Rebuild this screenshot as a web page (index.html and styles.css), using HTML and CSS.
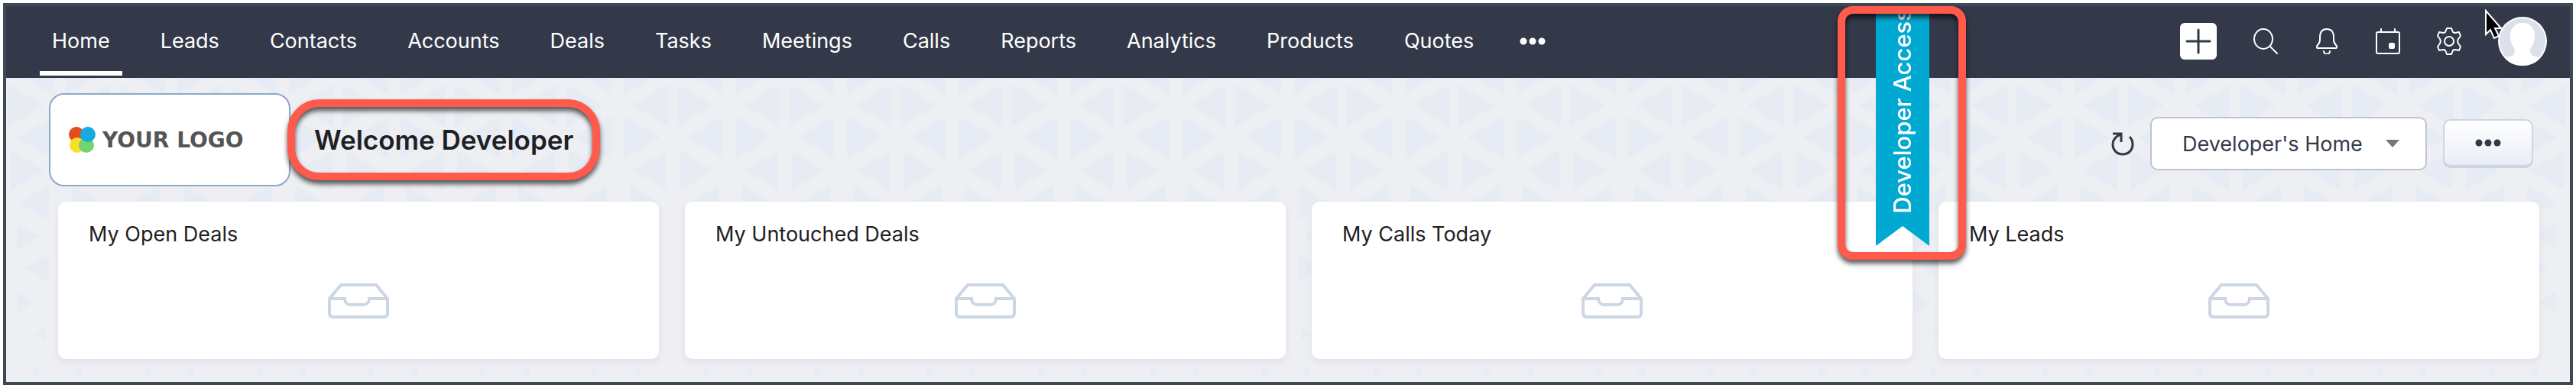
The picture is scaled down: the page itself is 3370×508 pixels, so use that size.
FILE: index.html
```html
<!DOCTYPE html>
<html lang="en">
<head>
    <meta charset="utf-8">
    <title>Developer's Home</title>
    <link rel="stylesheet" href="styles.css">
</head>
<body>
    <div class="app">
        <header class="topbar">
            <nav class="main-nav">
                <a href="#" class="active">Home</a>
                <a href="#">Leads</a>
                <a href="#">Contacts</a>
                <a href="#">Accounts</a>
                <a href="#">Deals</a>
                <a href="#">Tasks</a>
                <a href="#">Meetings</a>
                <a href="#">Calls</a>
                <a href="#">Reports</a>
                <a href="#">Analytics</a>
                <a href="#">Products</a>
                <a href="#">Quotes</a>
                <button class="nav-more" aria-label="More modules">
                    <svg width="34" height="14" viewBox="0 0 34 14" fill="currentColor"><circle cx="5" cy="7" r="4.5"/><circle cx="17" cy="7" r="4.5"/><circle cx="29" cy="7" r="4.5"/></svg>
                </button>
            </nav>
            <div class="tools">
                <button class="add-btn" aria-label="Create">
                    <svg width="48" height="48" viewBox="0 0 48 48" fill="none" stroke="#333949" stroke-width="3" stroke-linecap="round"><path d="M24 9v30M9 24h30"/></svg>
                </button>
                <button aria-label="Search">
                    <svg width="32" height="34" viewBox="0 0 32 34" fill="none" stroke="#fff" stroke-width="2" stroke-linecap="round"><ellipse cx="13" cy="14" rx="12" ry="13"/><path d="M22 24l9 9"/></svg>
                </button>
                <button aria-label="Notifications">
                    <svg width="32" height="34" viewBox="0 0 32 34" fill="none" stroke="#fff" stroke-width="2" stroke-linecap="round" stroke-linejoin="round"><path d="M4 26c-2 0-1-3 0-4 2-2 3-4 3-7v-3C7 5 10 1 16 1s9 4 9 11v3c0 3 1 5 3 7 1 1 2 4 0 4zM12 30c0 5 8 5 8 0"/></svg>
                </button>
                <button aria-label="Calendar">
                    <svg width="32" height="34" viewBox="0 0 32 34" fill="none" stroke="#fff" stroke-width="2" stroke-linecap="round"><rect x="1" y="5" width="30" height="28" rx="2"/><path d="M7 1v4M25 1v4"/><rect x="17" y="19" width="8" height="8" rx="2" fill="#fff" stroke="none"/></svg>
                </button>
                <button aria-label="Settings">
                    <svg width="32" height="36" viewBox="0 0 32 36" fill="none" stroke="#fff" stroke-width="2" stroke-linejoin="round"><path d="M13 1h6l2 5c1 1 2 1 3 1l5-1 2 5-3 4c-1 2-1 4 0 6l3 4-2 5-5-1c-1 0-2 0-3 1l-2 5h-6l-2-5c-1-1-2-1-3-1l-5 1-2-5 3-4c1-2 1-4 0-6l-3-4 2-5 5 1c1 0 2 0 3-1z"/><circle cx="16" cy="18" r="6"/></svg>
                </button>
                <button class="avatar" aria-label="Profile">
                    <svg width="64" height="64" viewBox="0 0 64 64"><circle cx="32" cy="32" r="32" fill="#fff"/><circle cx="32" cy="32" r="30" fill="#dce0eb"/><path d="M32 8c-10 0-16 7-16 17 0 8 3 13 6 18 0 5-1 8-7 9l-6 2c6 7 14 10 23 10s17-3 23-10l-6-2c-6-1-7-4-7-9 3-5 6-10 6-18 0-10-6-17-16-17z" fill="#fff"/></svg>
                </button>
            </div>
            <svg class="cursor" width="28" height="42" viewBox="0 0 28 42"><path d="M2 2v31l6-6 5 11 6-3-5-10h8z" fill="#000" stroke="#fff" stroke-width="2"/></svg>
        </header>

        <main class="home">
            <svg class="pattern" width="100%" height="100%" aria-hidden="true">
                <defs>
                    <pattern id="triangles" width="146" height="400" patternUnits="userSpaceOnUse">
                        <path fill="#e7ecf4" d="M78-34v56l48-28zM62-34v56L14-6z
                            M2 8v56l48-28zM136 8v56L88 36z
                            M78 50v56l48-28zM62 50v56L14 78z
                            M6 95v52l44-26zM134 95v52l-45-26z
                            M86 140v46l38-23zM56 140v46l-38-23z
                            M14 190v35l31-17zM124 190v35l-31-17z
                            M84 230v38l30-19zM56 230v38l-30-19z
                            M14 279v30l22-15zM124 279v30l-22-15z
                            M88 325v20l15-10zM52 325v20l-15-10z
                            M36 376v19l11-9zM100 376v19l-11-9z"/>
                    </pattern>
                </defs>
                <rect width="100%" height="100%" fill="url(#triangles)"/>
            </svg>

            <div class="welcome-row">
                <div class="logo">
                    <svg width="36" height="34" viewBox="0 0 36 34" aria-hidden="true"><circle cx="10" cy="10" r="10" fill="#e04e20"/><circle cx="11" cy="24" r="10" fill="#fddc2c"/><circle cx="23" cy="24" r="10" fill="#70d572"/><circle cx="25" cy="10" r="10" fill="#15abdf"/></svg>
                    <span>YOUR LOGO</span>
                </div>
                <h1>Welcome Developer</h1>
                <div class="actions">
                    <button class="refresh" aria-label="Refresh">
                        <svg width="30" height="32" viewBox="0 0 30 32" fill="none" stroke="#333949" stroke-width="3"><path d="M2 3h11v11M12 4C5 7 2 12 2 17c0 7 5 13 13 13s13-6 13-13c0-4-1-7-4-10"/></svg>
                    </button>
                    <div class="view-select">
                        <select aria-label="Home view">
                            <option>Developer's Home</option>
                        </select>
                        <svg width="18" height="10" viewBox="0 0 18 10"><path d="M0 0h18l-9 10z" fill="#777"/></svg>
                    </div>
                    <button class="more-btn" aria-label="More actions">
                        <svg width="34" height="14" viewBox="0 0 34 14" fill="#333949"><circle cx="5" cy="7" r="4.5"/><circle cx="17" cy="7" r="4.5"/><circle cx="29" cy="7" r="4.5"/></svg>
                    </button>
                </div>
            </div>

            <svg width="0" height="0" class="sprite">
                <symbol id="inbox" viewBox="0 0 80 46">
                    <path d="M2 20L17 2h46l15 18v19q0 5-5 5H7q-5 0-5-5zM2 20h20c0 5 3 8 8 8h16c5 0 8-3 8-8h24" fill="none" stroke="#cdd6e5" stroke-width="4"/>
                </symbol>
            </svg>
            <div class="cards">
                <section class="card">
                    <h2>My Open Deals</h2>
                    <svg class="empty"><use href="#inbox"/></svg>
                </section>
                <section class="card">
                    <h2>My Untouched Deals</h2>
                    <svg class="empty"><use href="#inbox"/></svg>
                </section>
                <section class="card">
                    <h2>My Calls Today</h2>
                    <svg class="empty"><use href="#inbox"/></svg>
                </section>
                <section class="card">
                    <h2>My Leads</h2>
                    <svg class="empty"><use href="#inbox"/></svg>
                </section>
            </div>
        </main>

        <div class="ribbon"><span>Developer Access</span></div>
        <div class="ribbon-highlight"></div>
    </div>
</body>
</html>
```
FILE: styles.css
```css
* {
    box-sizing: border-box;
}
body {
    margin: 4px;
    background: #fff;
    font-family: Inter, "Liberation Sans", sans-serif;
    font-size: 27px;
    color: #1f2023;
}
button {
    padding: 0;
    border: none;
    background: none;
    color: inherit;
    cursor: pointer;
}
svg {
    display: block;
}
.app {
    position: relative;
    border: 4px solid #3b4a55;
    box-shadow: 0 0 4px rgba(0, 0, 0, 0.6);
}

/* top navigation */
.topbar {
    position: relative;
    display: flex;
    justify-content: space-between;
    height: 94px;
    padding: 0 30px 3px 44px;
    background: #333949;
    color: #fff;
}
.main-nav {
    display: flex;
    gap: 34px;
}
.main-nav a {
    position: relative;
    display: flex;
    align-items: center;
    padding: 0 16px;
    color: #fff;
    text-decoration: none;
}
.main-nav a.active::after {
    content: "";
    position: absolute;
    left: 0;
    right: 0;
    bottom: 0;
    height: 6px;
    background: #fff;
}
.nav-more {
    padding: 0 10px;
}
.tools {
    display: flex;
    align-items: center;
    gap: 48px;
}
.add-btn {
    border-radius: 6px;
    background: #fff;
}
.cursor {
    position: absolute;
    top: 4px;
    right: 84px;
}

/* home */
.home {
    position: relative;
    padding: 20px 40px 30px 56px;
    background: #eeeff3;
}
.pattern {
    position: absolute;
    top: 0;
    left: 0;
}
.sprite {
    position: absolute;
}
.welcome-row {
    position: relative;
    display: flex;
    align-items: center;
    padding-right: 8px;
}
.logo {
    display: flex;
    align-items: center;
    gap: 8px;
    width: 316px;
    height: 122px;
    padding: 0 24px;
    border: 2px solid #8ca9c8;
    border-radius: 20px;
    background: #fff;
    color: #555;
    font-family: "DejaVu Sans", sans-serif;
    font-size: 28px;
    font-weight: bold;
    white-space: nowrap;
}
h1 {
    position: relative;
    margin: 0 0 0 31px;
    font-size: 35px;
    font-weight: 600;
    line-height: 46px;
}
h1::after {
    content: "";
    position: absolute;
    inset: -30px -35px;
    border: 10px solid #ff5a4b;
    border-radius: 42px;
    filter: drop-shadow(0 5px 3px rgba(0, 0, 0, 0.65));
}
.actions {
    display: flex;
    align-items: center;
    gap: 21px;
    margin-left: auto;
    padding-top: 10px;
}
.view-select {
    position: relative;
}
.view-select select {
    appearance: none;
    width: 362px;
    height: 70px;
    padding: 0 40px;
    border: 2px solid #bfc4cd;
    border-radius: 10px;
    background: #fff;
    color: #333949;
    font: inherit;
}
.view-select svg {
    position: absolute;
    top: 30px;
    right: 36px;
    pointer-events: none;
}
.more-btn {
    display: flex;
    align-items: center;
    justify-content: center;
    width: 118px;
    height: 64px;
    border: 2px solid #cfd4e1;
    border-bottom-width: 4px;
    border-radius: 10px;
    background: linear-gradient(#fff, #e9edf6);
}

/* dashboard cards */
.cards {
    position: relative;
    display: grid;
    grid-template-columns: repeat(4, 1fr);
    gap: 34px;
    margin: 20px 0 0 12px;
}
.card {
    height: 206px;
    padding: 26px 40px;
    border-radius: 10px;
    background: #fff;
    box-shadow: 0 4px 8px rgba(60, 70, 90, 0.08);
}
.card h2 {
    margin: 0;
    font-size: 27px;
    font-weight: 400;
    line-height: 34px;
}
.empty {
    width: 80px;
    height: 46px;
    margin: 47px auto 0;
}

/* developer access ribbon */
.ribbon {
    position: absolute;
    top: 0;
    right: 838px;
    display: flex;
    align-items: flex-end;
    justify-content: center;
    width: 70px;
    height: 314px;
    background: #00a9d1;
    color: #fff;
    clip-path: polygon(0 0, 100% 0, 100% 100%, 50% 288px, 0 100%);
}
.ribbon span {
    padding-top: 42px;
    font-size: 31px;
    font-weight: 500;
    line-height: 36px;
    white-space: nowrap;
    writing-mode: vertical-rl;
    transform: rotate(180deg);
}
.ribbon-highlight {
    position: absolute;
    top: 0;
    right: 790px;
    width: 168px;
    height: 332px;
    border: 10px solid #ff5a4b;
    border-radius: 20px;
    filter: drop-shadow(0 5px 3px rgba(0, 0, 0, 0.65));
    pointer-events: none;
}
```
